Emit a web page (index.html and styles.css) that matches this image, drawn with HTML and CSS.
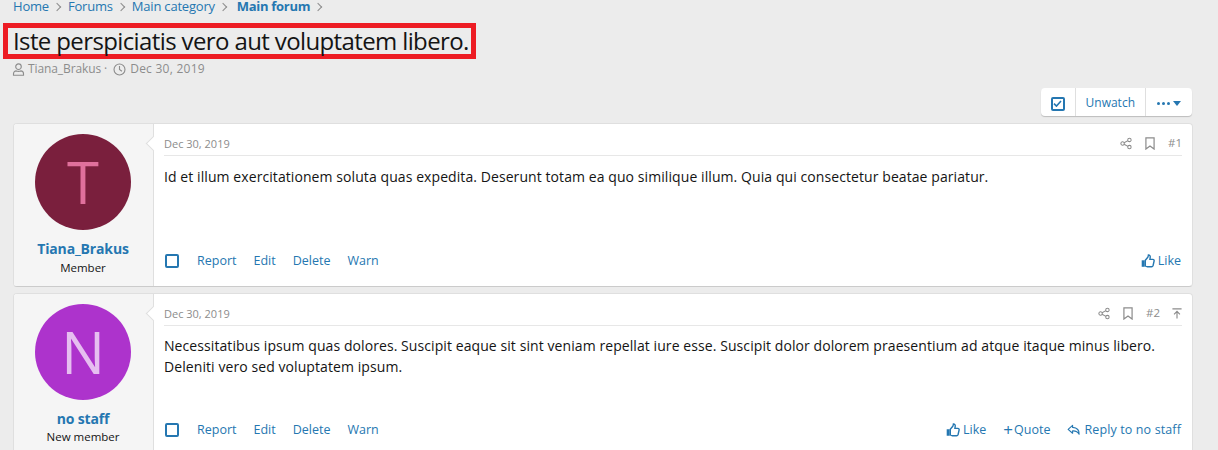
FILE: index.html
```html
<!DOCTYPE html>
<html lang="en">
<head>
  <meta charset="UTF-8">
  <title>Iste perspiciatis vero aut voluptatem libero.</title>
  <link rel="stylesheet" href="styles.css">
</head>
<body>
<svg class="icon-defs" width="0" height="0">
  <defs>
    <symbol id="i-share" viewBox="0 0 14 14"><g fill="none" stroke="currentColor" stroke-width="1.2"><circle cx="3" cy="7" r="2"/><circle cx="11" cy="2.8" r="2"/><circle cx="11" cy="11.2" r="2"/><path d="M4.8 6.1 9.2 3.7M4.8 7.9l4.4 2.4"/></g></symbol>
    <symbol id="i-bookmark" viewBox="0 0 12 14"><path d="M1.6 1h8.8v12L6 9.8 1.6 13z" fill="none" stroke="currentColor" stroke-width="1.3"/></symbol>
    <symbol id="i-top" viewBox="0 0 12 14"><path d="M.5 1.500h11M6 13V4.500M2.500 8 6 4.500 9.500 8" fill="none" stroke="currentColor" stroke-width="1.400"/></symbol>
    <symbol id="i-like" viewBox="0 0 14 14"><path d="M4.300 6.200 6.800 3.300c.4-.6.500-1.300.6-2.300 1.300 0 2 1 1.800 2.300L8.900 5.400h3c.9 0 1.400.8 1.200 1.600l-1 4.500c-.2.700-.7 1.200-1.500 1.200H6.300c-.8 0-1.400-.3-2-.7z" fill="none" stroke="currentColor" stroke-width="1.400"/><path d="M.7 6.300h3v6.500h-3z" fill="currentColor"/></symbol>
    <symbol id="i-reply" viewBox="0 0 15 14"><path d="M6 2 1.200 6.300 6 10.500V8c3.500-.2 5.500.8 7 3.500.4-4-2-7-7-7.300z" fill="none" stroke="currentColor" stroke-width="1.200" stroke-linejoin="round"/></symbol>
  </defs>
</svg>

<nav class="breadcrumbs">
  <a href="#">Home</a><span class="crumb-sep"></span>
  <a href="#">Forums</a><span class="crumb-sep"></span>
  <a href="#">Main category</a><span class="crumb-sep"></span>
  <a href="#" class="crumb-current">Main forum</a><span class="crumb-sep"></span>
</nav>

<h1 class="thread-title">Iste perspiciatis vero aut voluptatem libero.</h1>

<div class="thread-meta">
  <svg class="meta-icon meta-user" viewBox="0 0 14 14"><g fill="none" stroke="currentColor" stroke-width="1.200"><circle cx="7" cy="4" r="3"/><path d="M1.600 13.200v-1.500c0-2 1.400-3.200 3-3.200 1 .4 3.800.4 4.800 0 1.600 0 3 1.200 3 3.200v1.500z"/></g></svg>
  <span>Tiana_Brakus</span>
  <span>·</span>
  <svg class="meta-icon meta-clock" viewBox="0 0 14 14"><g fill="none" stroke="currentColor" stroke-width="1.200"><circle cx="7" cy="7" r="5.900"/><path d="M7 3.200V7l2.600 1.800"/></g></svg>
  <span class="meta-date">Dec 30, 2019</span>
</div>

<div class="thread-actions">
  <div class="button-group">
    <a class="group-btn" href="#"><span class="watch-box"><svg viewBox="0 0 10 8"><path d="M1 4.200 3.800 7 9 1.200" fill="none" stroke="currentColor" stroke-width="1.800"/></svg></span></a>
    <a class="group-btn" href="#">Unwatch</a>
    <a class="group-btn group-more" href="#"><span class="dots"><i></i><i></i><i></i></span><span class="caret"></span></a>
  </div>
</div>

<article class="post">
  <div class="post-user">
    <div class="avatar avatar-t">T</div>
    <a class="username" href="#">Tiana_Brakus</a>
    <div class="user-title">Member</div>
  </div>
  <div class="post-main">
    <header class="post-head">
      <span>Dec 30, 2019</span>
      <div class="post-head-tools">
        <svg class="tool-icon"><use href="#i-share"/></svg>
        <svg class="tool-icon"><use href="#i-bookmark"/></svg>
        <span>#1</span>
      </div>
    </header>
    <div class="post-body">Id et illum exercitationem soluta quas expedita. Deserunt totam ea quo similique illum. Quia qui consectetur beatae pariatur.</div>
    <footer class="post-foot">
      <div class="foot-left">
        <span class="select-box"></span>
        <a href="#">Report</a><a href="#">Edit</a><a href="#">Delete</a><a href="#">Warn</a>
      </div>
      <div class="foot-right">
        <a href="#"><svg class="link-icon"><use href="#i-like"/></svg>Like</a>
      </div>
    </footer>
  </div>
</article>

<article class="post post-second">
  <div class="post-user">
    <div class="avatar avatar-n">N</div>
    <a class="username" href="#">no staff</a>
    <div class="user-title">New member</div>
  </div>
  <div class="post-main">
    <header class="post-head">
      <span>Dec 30, 2019</span>
      <div class="post-head-tools">
        <svg class="tool-icon"><use href="#i-share"/></svg>
        <svg class="tool-icon"><use href="#i-bookmark"/></svg>
        <span>#2</span>
        <svg class="tool-icon tool-top"><use href="#i-top"/></svg>
      </div>
    </header>
    <div class="post-body">Necessitatibus ipsum quas dolores. Suscipit eaque sit sint veniam repellat iure esse. Suscipit dolor dolorem praesentium ad atque itaque minus libero. Deleniti vero sed voluptatem ipsum.</div>
    <footer class="post-foot">
      <div class="foot-left">
        <span class="select-box"></span>
        <a href="#">Report</a><a href="#">Edit</a><a href="#">Delete</a><a href="#">Warn</a>
      </div>
      <div class="foot-right">
        <a href="#"><svg class="link-icon"><use href="#i-like"/></svg>Like</a>
        <a href="#"><span class="plus">+</span>Quote</a>
        <a href="#"><svg class="link-icon"><use href="#i-reply"/></svg><span class="reply-text">Reply to no staff</span></a>
      </div>
    </footer>
  </div>
</article>
</body>
</html>
```

FILE: styles.css
```css
html, body {
  height: 450px;
  overflow: hidden;
}
body {
  margin: 0;
  padding: 0 25px 0 13px;
  background: #ececec;
  color: #141414;
  font-family: "Open Sans", "Liberation Sans", sans-serif;
  font-size: 13px;
  line-height: 1.4;
}
a {
  color: #2577b1;
  text-decoration: none;
}
.icon-defs {
  position: absolute;
}
.breadcrumbs {
  display: flex;
  align-items: center;
  height: 13px;
  font-size: 13px;
  line-height: 13px;
  letter-spacing: -0.2px;
}
.crumb-current {
  margin-left: 3px;
  font-weight: bold;
  letter-spacing: -0.3px;
}
.crumb-sep {
  width: 5px;
  height: 5px;
  margin: 0 8px 0 5px;
  border-top: 1px solid #8c8c8c;
  border-right: 1px solid #8c8c8c;
  transform: rotate(45deg);
}
.thread-title {
  width: max-content;
  height: 26px;
  margin: 10px 0 0 -10px;
  padding: 0 2px 0 5px;
  border: 5px solid #ed1c24;
  color: #141414;
  font-size: 24px;
  font-weight: normal;
  line-height: 26px;
  letter-spacing: -0.62px;
}
.thread-meta {
  display: flex;
  align-items: center;
  gap: 3px;
  height: 18px;
  padding-top: 1px;
  color: #8c8c8c;
  font-size: 12px;
  letter-spacing: -0.1px;
}
.meta-icon {
  width: 13px;
  height: 13px;
}
.meta-user {
  margin-left: -1px;
}
.meta-clock {
  margin-left: 3px;
}
.meta-date {
  margin-left: 1px;
  letter-spacing: 0.25px;
}
.thread-actions {
  display: flex;
  justify-content: flex-end;
  margin-top: 10px;
}
.button-group {
  display: flex;
  height: 28px;
  margin-right: 1px;
  background: #fff;
  border-radius: 4px;
  box-shadow: 0 1px 1px rgba(0, 0, 0, 0.2);
}
.group-btn {
  display: flex;
  align-items: center;
  box-sizing: border-box;
  padding: 3px 10px 0;
  border-left: 1px solid #dfdfdf;
  font-size: 12px;
}
.group-btn:first-child {
  border-left: 0;
}
.watch-box {
  display: flex;
  align-items: center;
  justify-content: center;
  box-sizing: border-box;
  width: 14px;
  height: 14px;
  border: 2px solid #2577b1;
  border-radius: 2px;
}
.watch-box svg {
  width: 9px;
  height: 7px;
}
.group-more {
  gap: 3px;
  padding: 3px 11px 0;
}
.dots {
  display: flex;
  gap: 2px;
}
.dots i {
  width: 3px;
  height: 3px;
  border-radius: 50%;
  background: #2577b1;
}
.caret {
  border-top: 5px solid #2577b1;
  border-left: 4px solid transparent;
  border-right: 4px solid transparent;
}
.post {
  display: flex;
  box-sizing: border-box;
  height: 164px;
  margin-top: 7px;
  background: #fff;
  border: 1px solid #dfdfdf;
  border-bottom-color: #cbcbcb;
  border-radius: 4px;
  overflow: hidden;
}
.post-second {
  margin-top: 6px;
}
.post-user {
  flex: none;
  box-sizing: border-box;
  width: 140px;
  padding: 10px 1px 0 0;
  background: #f5f5f5;
  border-right: 1px solid #dfdfdf;
  text-align: center;
}
.avatar {
  width: 96px;
  height: 96px;
  margin: 0 auto 10px;
  border-radius: 50%;
  font-size: 58px;
  line-height: 96px;
}
.avatar-t {
  background: #7a1f3d;
  color: #e0709c;
}
.avatar-n {
  background: #ad33cc;
  color: #e6bef0;
}
.username {
  display: block;
  font-size: 14px;
  font-weight: bold;
  line-height: 18px;
  letter-spacing: -0.15px;
}
.user-title {
  margin-top: 1px;
  font-size: 11.5px;
  line-height: 18px;
}
.post-second .user-title {
  margin-top: 0;
}
.post-main {
  position: relative;
  flex: 1;
  display: flex;
  flex-direction: column;
  padding: 8px 10px 0 10px;
}
.post-main::before {
  content: "";
  position: absolute;
  left: -6px;
  top: 14px;
  width: 10px;
  height: 10px;
  background: #fff;
  border-left: 1px solid #dfdfdf;
  border-bottom: 1px solid #dfdfdf;
  transform: rotate(45deg);
}
.post-head {
  display: flex;
  justify-content: space-between;
  align-items: center;
  height: 23px;
  border-bottom: 1px solid #e7e7e7;
  color: #8c8c8c;
  font-size: 11px;
}
.post-head-tools {
  display: flex;
  align-items: center;
  gap: 12px;
}
.post-head-tools span {
  font-size: 11.5px;
}
.tool-icon {
  width: 12px;
  height: 13px;
}
.tool-top {
  width: 10px;
}
.post-body {
  margin-top: 11px;
  font-size: 14px;
  line-height: 20.5px;
  letter-spacing: 0.08px;
}
.post-second .post-body {
  margin-top: 10px;
}
.post-foot {
  display: flex;
  justify-content: space-between;
  align-items: center;
  position: absolute;
  left: 10px;
  right: 11px;
  top: 128px;
  font-size: 12.5px;
}
.post-second .post-foot {
  top: 127px;
}
.foot-left, .foot-right {
  display: flex;
  align-items: center;
}
.foot-left a {
  margin-left: 17px;
}
.foot-left a:first-of-type {
  margin-left: 18px;
}
.foot-right a {
  display: flex;
  align-items: center;
  margin-left: 17px;
}
.reply-text {
  letter-spacing: 0.12px;
}
.select-box {
  box-sizing: border-box;
  width: 14px;
  height: 14px;
  margin-left: 0;
  border: 2px solid #2577b1;
  border-radius: 2px;
  background: #fff;
}
.foot-left {
  padding-left: 1px;
}
.link-icon {
  width: 14px;
  height: 14px;
  margin-right: 3px;
}
.plus {
  font-size: 17px;
  line-height: 14px;
  margin-right: 1px;
}
```
